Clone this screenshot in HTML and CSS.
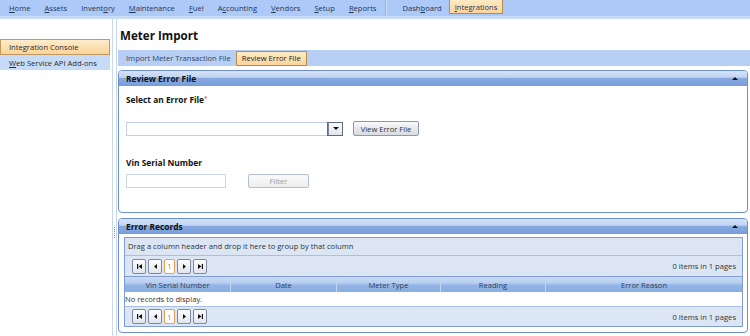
FILE: index.html
```html
<!DOCTYPE html>
<html>
<head>
<meta charset="utf-8">
<title>Meter Import</title>
<link rel="stylesheet" href="styles.css">
</head>
<body>
<nav class="topnav">
  <a class="nav-item"><u>H</u>ome</a>
  <a class="nav-item"><u>A</u>ssets</a>
  <a class="nav-item">Invent<u>o</u>ry</a>
  <a class="nav-item"><u>M</u>aintenance</a>
  <a class="nav-item"><u>F</u>uel</a>
  <a class="nav-item">A<u>c</u>counting</a>
  <a class="nav-item"><u>V</u>endors</a>
  <a class="nav-item"><u>S</u>etup</a>
  <a class="nav-item"><u>R</u>eports</a>
  <span class="nav-sep"></span>
  <a class="nav-item">Dash<u>b</u>oard</a>
  <a class="nav-item active"><u>I</u>ntegrations</a>
</nav>
<div class="layout">
  <aside class="sidebar">
    <div class="side-item selected">Integration Console</div>
    <div class="side-item"><u>W</u>eb Service API Add-ons</div>
  </aside>
  <div class="splitter"><span class="grip"></span></div>
  <main class="content">
    <h1 class="page-title">Meter Import</h1>
    <div class="tabbar">
      <span class="tab">Import Meter Transaction File</span>
      <span class="tab active">Review Error File</span>
    </div>
    <section class="panel panel-review">
      <header class="panel-head"><span>Review Error File</span><span class="collapse"></span></header>
      <div class="panel-body form">
        <div class="field-label">Select an Error File<span class="req">*</span></div>
        <div class="row row-file">
          <div class="combo"><span class="combo-btn"><span class="tri-down"></span></span></div>
          <button class="btn btn-view">View Error File</button>
        </div>
        <div class="field-label label-vin">Vin Serial Number</div>
        <div class="row row-vin">
          <span class="textbox"></span>
          <button class="btn btn-filter" disabled>Filter</button>
        </div>
      </div>
    </section>
    <section class="panel panel-records">
      <header class="panel-head"><span>Error Records</span><span class="collapse"></span></header>
      <div class="panel-body grid-wrap">
        <div class="grid">
          <div class="group-panel">Drag a column header and drop it here to group by that column</div>
          <div class="pager pager-top">
            <div class="pager-btns">
              <span class="pbtn"><svg width="7" height="7" viewBox="0 0 7 7"><rect x="1" y="1" width="1.2" height="5" fill="#111"/><path d="M6 1 L2.6 3.5 L6 6 Z" fill="#111"/></svg></span>
              <span class="pbtn"><svg width="7" height="7" viewBox="0 0 7 7"><path d="M5 1 L2 3.5 L5 6 Z" fill="#111"/></svg></span>
              <span class="pbtn pnum">1</span>
              <span class="pbtn"><svg width="7" height="7" viewBox="0 0 7 7"><path d="M2 1 L5 3.5 L2 6 Z" fill="#111"/></svg></span>
              <span class="pbtn"><svg width="7" height="7" viewBox="0 0 7 7"><path d="M1 1 L4.4 3.5 L1 6 Z" fill="#111"/><rect x="4.8" y="1" width="1.2" height="5" fill="#111"/></svg></span>
            </div>
            <span class="pager-info">0 items in 1 pages</span>
          </div>
          <div class="grid-head">
            <span class="col c1">Vin Serial Number</span>
            <span class="col c2">Date</span>
            <span class="col c3">Meter Type</span>
            <span class="col c4">Reading</span>
            <span class="col c5">Error Reason</span>
          </div>
          <div class="grid-empty">No records to display.</div>
          <div class="pager pager-bottom">
            <div class="pager-btns">
              <span class="pbtn"><svg width="7" height="7" viewBox="0 0 7 7"><rect x="1" y="1" width="1.2" height="5" fill="#111"/><path d="M6 1 L2.6 3.5 L6 6 Z" fill="#111"/></svg></span>
              <span class="pbtn"><svg width="7" height="7" viewBox="0 0 7 7"><path d="M5 1 L2 3.5 L5 6 Z" fill="#111"/></svg></span>
              <span class="pbtn pnum">1</span>
              <span class="pbtn"><svg width="7" height="7" viewBox="0 0 7 7"><path d="M2 1 L5 3.5 L2 6 Z" fill="#111"/></svg></span>
              <span class="pbtn"><svg width="7" height="7" viewBox="0 0 7 7"><path d="M1 1 L4.4 3.5 L1 6 Z" fill="#111"/><rect x="4.8" y="1" width="1.2" height="5" fill="#111"/></svg></span>
            </div>
            <span class="pager-info">0 items in 1 pages</span>
          </div>
        </div>
      </div>
    </section>
  </main>
</div>
</body>
</html>
```
FILE: styles.css
```css
* { box-sizing: border-box; }
html, body { margin: 0; padding: 0; background: #fff; }
body {
  font-family: "Open Sans", "Noto Sans", "Liberation Sans", sans-serif;
  font-size: 7.6px;
  color: #333;
  width: 750px;
  height: 336px;
  overflow: hidden;
}
u { text-decoration: underline; text-underline-offset: 1px; }

/* top navigation */
.topnav {
  display: flex;
  align-items: stretch;
  height: 19px;
  background: #adc9f7;
  border-bottom: 3px solid #c8dcf4;
  padding-left: 2px;
}
.nav-item {
  display: flex;
  align-items: center;
  padding: 0 7px;
  color: #1f3556;
  height: 16px;
}
.nav-item.active {
  height: 14px;
  background: linear-gradient(#fde9c3, #fbd59c);
  border: 1px solid #b58d4c;
  border-top: none;
  padding: 0 5px;
}
.nav-sep {
  width: 2px;
  height: 16px;
  margin: 0 8px 0 2px;
  border-left: 1px solid #9bb6e4;
  border-right: 1px solid #cbdcf6;
}

/* layout */
.layout {
  display: flex;
  height: 317px;
}
.sidebar {
  width: 112px;
  padding-top: 20px;
  background: #fff;
}
.side-item {
  height: 15px;
  display: flex;
  align-items: center;
  padding-left: 9px;
  margin-right: 2px;
  background: #c7daf6;
  color: #2b2b2b;
}
.side-item.selected {
  height: 16px;
  background: linear-gradient(#fdeccb, #fbd39a);
  border: 1px solid #c29a5e;
  padding-left: 8px;
}
.splitter {
  width: 5px;
  border-left: 1px solid #c6d7ee;
  border-right: 1px solid #c6d7ee;
  background: #fff;
  position: relative;
}
.grip {
  position: absolute;
  left: 1px;
  top: 208px;
  width: 1px;
  height: 11px;
  background: repeating-linear-gradient(#7b93bb 0 1px, transparent 1px 2px);
}
.content {
  flex: 1;
  display: flex;
  flex-direction: column;
  padding-left: 1px;
}
.page-title {
  margin: 0;
  font-size: 11.6px;
  font-weight: 700;
  color: #111;
  height: 31px;
  line-height: 14px;
  padding: 10px 0 0 2px;
}
.tabbar {
  height: 16px;
  background: #b8cff5;
  display: flex;
  align-items: center;
  gap: 5px;
  padding-left: 8px;
}
.tab { color: #33445e; }
.tab.active {
  height: 15px;
  display: flex;
  align-items: center;
  padding: 0 5px;
  background: linear-gradient(#fde9c3, #fbd59c);
  border: 1px solid #b58d4c;
  color: #222;
}

/* panels */
.panel {
  margin: 4px 2px 0 0;
  border: 1px solid #6f8fcf;
  border-radius: 4px;
  background: #fff;
  overflow: hidden;
}
.panel-head {
  height: 15px;
  display: flex;
  align-items: center;
  justify-content: space-between;
  padding: 0 9px 0 7px;
  font-weight: 700;
  font-size: 8.4px;
  color: #111;
  background: linear-gradient(#d6e3f8 0%, #c0d4f3 45%, #88aae0 52%, #7a9fdc 100%);
  border-bottom: 1px solid #7c9bd4;
}
.collapse {
  width: 0; height: 0;
  border-left: 3px solid transparent;
  border-right: 3px solid transparent;
  border-bottom: 3px solid #111;
}
.panel-review { height: 143px; }
.form { padding: 8px 7px 0; }
.field-label {
  font-weight: 700;
  font-size: 8.4px;
  color: #111;
  height: 12px;
  line-height: 12px;
}
.req { color: #e05a5a; font-size: 6px; vertical-align: top; line-height: 8px; }
.row { display: flex; align-items: center; }
.row-file { margin-top: 15px; height: 15px; }
.combo {
  width: 217px;
  height: 14px;
  border: 1px solid #c3cfe4;
  display: flex;
  justify-content: flex-end;
}
.combo-btn {
  width: 14px;
  height: 12px;
  border-left: 1px solid #7b8aa2;
  background: linear-gradient(#fafafa, #e2e6ec);
  display: flex;
  align-items: center;
  justify-content: center;
  outline: 1px solid #5d6c84;
}
.tri-down {
  width: 0; height: 0;
  border-left: 3px solid transparent;
  border-right: 3px solid transparent;
  border-top: 3px solid #111;
}
.btn {
  font-family: inherit;
  font-size: 7.6px;
  padding: 0;
  height: 15px;
  border: 1px solid #8b98ad;
  border-radius: 2px;
  background: linear-gradient(#fbfbfb, #e6e8ec 50%, #d9dce2);
  color: #333;
}
.btn-view { width: 66px; margin-left: 10px; }
.label-vin { margin-top: 21px; }
.row-vin { margin-top: 5px; }
.textbox {
  width: 100px;
  height: 14px;
  border: 1px solid #c9d6e8;
  background: #fff;
}
.btn-filter {
  width: 61px;
  height: 14px;
  margin-left: 22px;
  color: #9a9a9a;
  border-color: #b5bfcf;
  background: linear-gradient(#fafafa, #eceef1);
}

.panel-records { margin-top: 5px; height: 115px; }
.grid-wrap { padding: 3px 4px 0 5px; }
.grid {
  border: 1px solid #7f9dd4;
  background: #dbe5f3;
  height: 90px;
}
.group-panel {
  height: 18px;
  line-height: 17px;
  padding-left: 3px;
  color: #333;
  border-bottom: 1px solid #a9bfe3;
}
.pager {
  display: flex;
  align-items: center;
  justify-content: space-between;
  padding: 0 6px 0 7px;
}
.pager-top { height: 20px; }
.pager-bottom { height: 20px; border-top: 1px solid #a9bfe3; }
.pager-btns { display: flex; gap: 2px; }
.pbtn {
  width: 14px;
  height: 15px;
  border: 1px solid #7c8aa1;
  border-radius: 2px;
  background: linear-gradient(#fdfdfd, #e1e6ee);
  display: flex;
  align-items: center;
  justify-content: center;
}
.pnum {
  width: 11px;
  border-color: #e3a05a;
  background: #fff;
  color: #d5771e;
  font-size: 7.6px;
}
.pager-info { color: #333; }
.grid-head {
  display: grid;
  grid-template-columns: 106px 106px 104px 105px 1fr;
  height: 16px;
  background: linear-gradient(#c9daf4 0%, #b7cdf0 40%, #93b4e6 55%, #8aaee2 100%);
  border-top: 1px solid #7f9dd4;
}
.col {
  display: flex;
  align-items: center;
  justify-content: center;
  color: #2e3f5c;
  border-right: 1px solid #c3d4ef;
}
.col.c5 { border-right: none; }
.grid-empty {
  height: 14px;
  line-height: 14px;
  background: #fff;
  color: #333;
  padding-left: 0;
}
```
